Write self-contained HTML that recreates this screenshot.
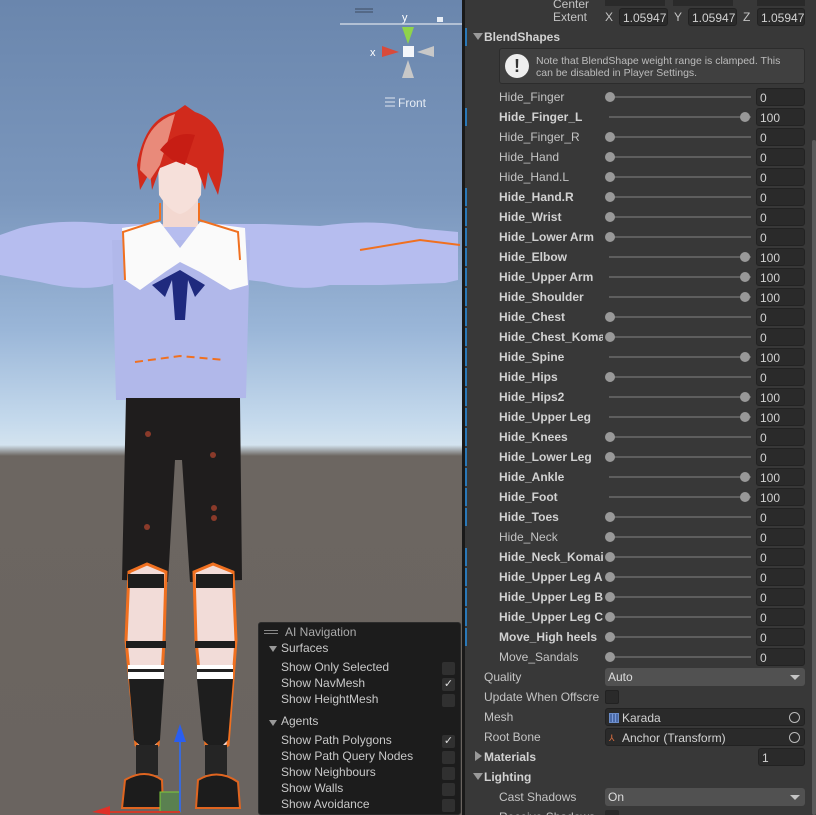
<!DOCTYPE html>
<html style="overflow:hidden;width:816px;height:815px"><head><meta charset="utf-8"><style>
*{margin:0;padding:0;box-sizing:border-box}
body{width:816px;height:815px;overflow:hidden;background:#383838;font-family:"Liberation Sans",sans-serif;font-size:12px;color:#c4c4c4;position:relative}
#scene{position:absolute;left:0;top:0;width:462px;height:815px;overflow:hidden;background:linear-gradient(#6a86ad 0px,#7b97bd 200px,#9ab6d8 330px,#c4d9ec 420px,#d3e3ef 445px,#6c6661 456px,#6a6460 815px)}
#sep{position:absolute;left:462px;top:0;width:3px;height:815px;background:#191919}
#insp{position:absolute;left:465px;top:0;width:351px;height:815px;background:#383838;overflow:hidden}
.r{position:absolute;left:0;width:347px;height:20px}
.lb{position:absolute;left:34px;top:3px;width:104px;overflow:hidden;white-space:nowrap;color:#c4c4c4}
.b .lb{font-weight:bold;color:#d2d2d2}
.bar{position:absolute;left:0;top:1px;width:2px;height:18px;background:#2a78b8}
.tr{position:absolute;left:144px;top:9px;width:142px;height:2px;background:#5e5e5e}
.kn{position:absolute;top:5px;width:10px;height:10px;border-radius:50%;background:#999}
.fd{position:absolute;left:291px;top:1px;width:49px;height:18px;background:#2a2a2a;border:1px solid #222;border-radius:3px;padding:2px 3px;color:#d2d2d2}
.pl{position:absolute;left:19px;top:3px;color:#c4c4c4}
.dd{position:absolute;left:140px;top:1px;width:200px;height:18px;background:#515151;border-radius:3px;padding:2px 3px;color:#ddd}
.dd:after{content:"";position:absolute;right:5px;top:7px;border:5px solid transparent;border-top:5px solid #c4c4c4;border-bottom:0}
.of{position:absolute;left:140px;top:1px;width:200px;height:18px;background:#2a2a2a;border:1px solid #222;border-radius:3px;padding:2px 3px 2px 16px;color:#d2d2d2}
.tri{position:absolute;left:8px;top:6px;border:5px solid transparent;border-top:7px solid #999;border-bottom:0}
.trir{position:absolute;left:10px;top:4px;border:5px solid transparent;border-left:7px solid #999;border-right:0}
#nav{position:absolute;left:258px;top:622px;width:203px;height:193px;background:#1c1c1c;border:1px solid #2c2c2c;border-radius:3px;color:#c8c8c8;font-size:12px}
#nav div{position:absolute;white-space:nowrap}
.cb{position:absolute;left:183px;width:13px;height:13px;background:#303030;border-radius:2px}
</style></head><body>
<div id="scene">
<svg width="462" height="815" style="position:absolute;left:0;top:0">
<line x1="355" y1="9" x2="373" y2="9" stroke="#3d4b60" stroke-width="1"/><line x1="355" y1="12" x2="373" y2="12" stroke="#3d4b60" stroke-width="1"/>
<line x1="340" y1="24" x2="462" y2="24" stroke="#c9d2e0" stroke-width="1.5"/>
<text x="402" y="21" fill="#fff" font-size="11" font-family="Liberation Sans">y</text>
<rect x="437" y="17" width="6" height="5" fill="#e8eef6"/>
<polygon points="402,27 414,27 408,44" fill="#8fd44a"/>
<polygon points="382,46 382,57 399,52" fill="#d94a3a"/>
<polygon points="434,46 434,57 417,52" fill="#c8c8c8"/>
<polygon points="402,78 414,78 408,60" fill="#c8c8c8"/>
<rect x="403" y="46" width="11" height="11" fill="#f4f6fa"/>
<text x="370" y="56" fill="#fff" font-size="11" font-family="Liberation Sans">x</text>
<g stroke="#dfe6f0" stroke-width="1"><line x1="385" y1="98" x2="395" y2="98"/><line x1="385" y1="102" x2="395" y2="102"/><line x1="385" y1="106" x2="395" y2="106"/></g>
<text x="398" y="107" fill="#e6ecf4" font-size="12" font-family="Liberation Sans">Front</text>
<!-- arms -->
<path d="M0 235 L0 275 L40 282 Q80 292 110 285 L125 280 L248 280 L265 282 Q300 292 330 285 L380 285 L445 283 L458 280 L458 232 L415 228 Q375 218 320 226 L265 224 L110 224 Q60 218 20 228 Z" fill="#b6bdef"/>
<!-- body -->
<path d="M112 240 L250 240 L246 398 L116 400 Z" fill="#b1b8ea"/>
<!-- neck/face -->
<rect x="163" y="195" width="35" height="32" fill="#f3d8d0"/>
<path d="M158 160 L202 160 L201 195 Q190 212 180 214 Q170 212 159 195 Z" fill="#f6e0da"/>
<!-- hair -->
<path d="M137 165 L140 190 L150 172 L152 190 L160 168 L180 160 L197 168 L205 190 L208 172 L218 195 L222 175 L224 150 Q220 120 195 112 L185 105 L175 112 Q145 118 137 165 Z" fill="#d12a1c"/>
<path d="M140 170 Q142 125 175 114 L168 140 L160 165 L150 180 Z" fill="#e98a7a"/>
<path d="M160 150 Q175 130 195 135 L185 165 L172 160 Z" fill="#c71d14"/>
<!-- collar -->
<path d="M122 228 L160 222 L180 248 L200 222 L245 228 L248 285 L230 290 L200 272 L180 262 L165 272 L140 290 L125 280 Z" fill="#fafafa"/>
<path d="M152 285 L180 270 L205 285 L195 297 L188 280 L185 320 L175 320 L172 280 L165 297 Z" fill="#1f2a7e"/>
<path d="M160 203 L160 220 L123 232 L125 280" fill="none" stroke="#f07020" stroke-width="2"/>
<path d="M199 203 L199 220 L238 232 L240 260" fill="none" stroke="#f07020" stroke-width="2"/>
<path d="M135 362 L180 356 L225 360" fill="none" stroke="#f07020" stroke-width="2" stroke-dasharray="8 5"/>
<path d="M360 250 L420 240 L460 245" fill="none" stroke="#f07020" stroke-width="2"/>
<!-- shorts -->
<path d="M126 398 L240 398 L242 580 L190 582 L182 460 L175 460 L168 582 L122 580 Z" fill="#1f1d1d"/>
<g fill="#8a3a2a"><circle cx="148" cy="434" r="3"/><circle cx="213" cy="455" r="3"/><circle cx="214" cy="508" r="3"/><circle cx="214" cy="518" r="3"/><circle cx="147" cy="527" r="3"/></g>
<!-- legs -->
<path d="M129 572 L147 564 L166 572 L164 640 L158 745 L147 752 L136 745 L126 640 Z" fill="#f2dcd8" stroke="#f07020" stroke-width="3"/>
<path d="M194 572 L213 564 L233 572 L236 640 L228 745 L216 752 L206 745 L196 640 Z" fill="#f2dcd8" stroke="#f07020" stroke-width="3"/>
<rect x="128" y="574" width="36" height="14" fill="#1e1e1e"/><rect x="196" y="574" width="37" height="14" fill="#1e1e1e"/>
<rect x="126" y="641" width="40" height="7" fill="#1e1e1e"/><rect x="195" y="641" width="40" height="7" fill="#1e1e1e"/>
<rect x="128" y="665" width="36" height="14" fill="#fff"/><rect x="197" y="665" width="36" height="14" fill="#fff"/>
<rect x="128" y="669" width="36" height="3" fill="#222"/><rect x="197" y="669" width="36" height="3" fill="#222"/>
<path d="M129 679 L164 679 L160 740 L147 752 L134 740 Z" fill="#1e1e1e"/>
<path d="M197 679 L233 679 L228 740 L216 752 L203 740 Z" fill="#1e1e1e"/>
<rect x="136" y="745" width="22" height="30" fill="#252525"/><rect x="205" y="745" width="22" height="30" fill="#252525"/>
<path d="M122 808 L125 780 Q145 768 162 780 L163 808 Z" fill="#1c1c1c" stroke="#e06520" stroke-width="2"/>
<path d="M196 808 L198 780 Q218 768 238 782 L240 808 Z" fill="#1c1c1c" stroke="#e06520" stroke-width="2"/>
<rect x="160" y="792" width="20" height="20" fill="#5a8050" stroke="#7dcb3a" stroke-width="1"/>
<line x1="180" y1="740" x2="180" y2="812" stroke="#3a6ad8" stroke-width="2"/>
<polygon points="174,742 186,742 180,724" fill="#2a5ef0"/>
<line x1="100" y1="812" x2="180" y2="812" stroke="#d03a2a" stroke-width="2"/>
<polygon points="110,806 110,815 92,812" fill="#e03028"/>
</svg>
<div id="nav">
<div style="left:5px;top:2px;width:14px;border-top:1px solid #888;height:4px;margin-top:5px;border-bottom:1px solid #888"></div>
<div style="left:26px;top:2px;color:#aaa">AI Navigation</div>
<div style="left:10px;top:23px;border:4px solid transparent;border-top:6px solid #999"></div>
<div style="left:22px;top:18px">Surfaces</div>
<div style="left:22px;top:37px">Show Only Selected</div><span class="cb" style="top:39px"></span>
<div style="left:22px;top:53px">Show NavMesh</div><span class="cb" style="top:55px;color:#ddd;font-size:11px;text-align:center;line-height:13px">✓</span>
<div style="left:22px;top:69px">Show HeightMesh</div><span class="cb" style="top:71px"></span>
<div style="left:10px;top:97px;border:4px solid transparent;border-top:6px solid #999"></div>
<div style="left:22px;top:91px">Agents</div>
<div style="left:22px;top:110px">Show Path Polygons</div><span class="cb" style="top:112px;color:#ddd;font-size:11px;text-align:center;line-height:13px">✓</span>
<div style="left:22px;top:126px">Show Path Query Nodes</div><span class="cb" style="top:128px"></span>
<div style="left:22px;top:142px">Show Neighbours</div><span class="cb" style="top:144px"></span>
<div style="left:22px;top:158px">Show Walls</div><span class="cb" style="top:160px"></span>
<div style="left:22px;top:174px">Show Avoidance</div><span class="cb" style="top:176px"></span>
</div>
</div>
<div id="sep"></div>
<div id="insp">
<div style="position:absolute;left:347px;top:140px;width:4px;height:675px;background:#5a5a5a;border-radius:2px"></div>
<div class="r" style="top:-6px"><span class="lb" style="left:88px">Center</span><span style="position:absolute;left:140px;top:0;width:60px;height:12px;background:#2a2a2a"></span><span style="position:absolute;left:208px;top:0;width:60px;height:12px;background:#2a2a2a"></span><span style="position:absolute;left:292px;top:0;width:48px;height:12px;background:#2a2a2a"></span></div>
<div class="r" style="top:7px"><span class="lb" style="left:88px;top:3px">Extent</span>
<span style="position:absolute;left:140px;top:3px">X</span><span class="fd" style="left:154px;width:49px;top:1px">1.05947</span>
<span style="position:absolute;left:209px;top:3px">Y</span><span class="fd" style="left:223px;width:49px">1.05947</span>
<span style="position:absolute;left:278px;top:3px">Z</span><span class="fd" style="left:292px;width:48px">1.05947</span></div>
<div class="r" style="top:27px"><span class="bar"></span><span class="tri"></span><span class="pl" style="font-weight:bold;color:#d2d2d2">BlendShapes</span></div>
<div style="position:absolute;left:34px;top:48px;width:306px;height:36px;background:#404040;border:1px solid #2c2c2c;border-radius:3px">
<div style="position:absolute;left:5px;top:5px;width:24px;height:24px;border-radius:50%;background:#eee;color:#333;font-weight:bold;font-size:18px;text-align:center;line-height:24px">!</div>
<div style="position:absolute;left:36px;top:6px;font-size:10.5px;line-height:12px;color:#bcbcbc">Note that BlendShape weight range is clamped. This<br>can be disabled in Player Settings.</div></div>
<div id="rows"></div>
<div class="r" style="top:667px"><span class="pl">Quality</span><span class="dd">Auto</span></div>
<div class="r" style="top:687px"><span class="pl">Update When Offscre</span><span style="position:absolute;left:140px;top:3px;width:14px;height:14px;background:#2a2a2a;border:1px solid #222;border-radius:2px"></span></div>
<div class="r" style="top:707px"><span class="pl">Mesh</span><span class="of">Karada<span style="position:absolute;left:3px;top:4px;width:10px;height:10px;border:1px solid #6a8cc8;background:repeating-linear-gradient(90deg,#4a6aa8 0 2px,#7a9ad8 2px 3px)"></span><span style="position:absolute;right:4px;top:3px;width:11px;height:11px;border:1.5px solid #bbb;border-radius:50%"></span></span></div>
<div class="r" style="top:727px"><span class="pl">Root Bone</span><span class="of">Anchor (Transform)<span style="position:absolute;left:3px;top:4px;color:#e07040;font-size:9px">⅄</span><span style="position:absolute;right:4px;top:3px;width:11px;height:11px;border:1.5px solid #bbb;border-radius:50%"></span></span></div>
<div class="r" style="top:747px"><span class="trir"></span><span class="pl" style="font-weight:bold;color:#d2d2d2">Materials</span><span class="fd" style="left:293px;width:47px">1</span></div>
<div class="r" style="top:767px"><span class="tri"></span><span class="pl" style="font-weight:bold;color:#d2d2d2">Lighting</span></div>
<div class="r" style="top:787px"><span class="lb">Cast Shadows</span><span class="dd">On</span></div>
<div class="r" style="top:807px"><span class="lb">Receive Shadows</span><span style="position:absolute;left:140px;top:3px;width:14px;height:14px;background:#2a2a2a;border-radius:2px"></span></div>
</div>
<script>
var d=[["Hide_Finger",0,0],["Hide_Finger_L",100,1],["Hide_Finger_R",0,0],["Hide_Hand",0,0],["Hide_Hand.L",0,0],["Hide_Hand.R",0,1],["Hide_Wrist",0,1],["Hide_Lower Arm",0,1],["Hide_Elbow",100,1],["Hide_Upper Arm",100,1],["Hide_Shoulder",100,1],["Hide_Chest",0,1],["Hide_Chest_Komai",0,1],["Hide_Spine",100,1],["Hide_Hips",0,1],["Hide_Hips2",100,1],["Hide_Upper Leg",100,1],["Hide_Knees",0,1],["Hide_Lower Leg",0,1],["Hide_Ankle",100,1],["Hide_Foot",100,1],["Hide_Toes",0,1],["Hide_Neck",0,0],["Hide_Neck_Komai",0,1],["Hide_Upper Leg A",0,1],["Hide_Upper Leg B",0,1],["Hide_Upper Leg C",0,1],["Move_High heels",0,1],["Move_Sandals",0,0]];
var h="";d.forEach(function(r,i){h+='<div class="r'+(r[2]?' b':'')+'" style="top:'+(87+i*20)+'px">'+(r[2]?'<span class="bar"></span>':'')+'<span class="lb">'+r[0]+'</span><span class="tr"></span><span class="kn" style="left:'+(r[1]?275:140)+'px"></span><span class="fd">'+r[1]+'</span></div>';});
document.getElementById("rows").innerHTML=h;
</script>
</body></html>
